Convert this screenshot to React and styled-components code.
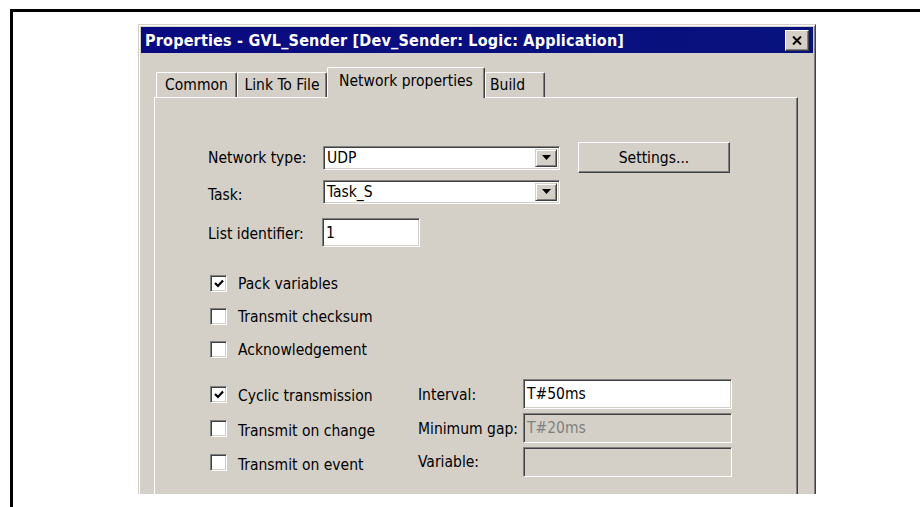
import styled, { createGlobalStyle } from "styled-components";

const GlobalStyle = createGlobalStyle`
  html, body {
    margin: 0;
    background: #fff;
  }
  body {
    font-family: "DejaVu Sans Condensed", "DejaVu Sans", sans-serif;
    font-size: 15.5px;
    color: #000;
  }
`;

const Page = styled.div`
  width: 920px;
  height: 507px;
  overflow: hidden;
  padding: 9px 0 0 10px;
  box-sizing: border-box;
  background: #fff;
`;

const Frame = styled.div`
  height: 100%;
  box-sizing: border-box;
  border-left: 3px solid #000;
  border-top: 3px solid #000;
  padding: 12px 0 0 125px;
`;

const Clip = styled.div`
  width: 678px;
  height: 470px;
  overflow: hidden;
`;

const Dialog = styled.div`
  width: 678px;
  height: 520px;
  box-sizing: border-box;
  background: #d4d0c8;
  border: 1px solid;
  border-color: #d4d0c8 #404040 #404040 #d4d0c8;
  box-shadow: inset 1px 1px #fff, inset -1px -1px #808080;
  padding: 2px;
`;

const TitleBar = styled.div`
  height: 26px;
  display: flex;
  align-items: center;
  justify-content: space-between;
  padding: 0 4px;
  background: linear-gradient(to right, #0a0a80, #08127e);
`;

const Title = styled.span`
  color: #fff;
  font-weight: bold;
  font-size: 16px;
  letter-spacing: 0.2px;
  white-space: nowrap;
`;

const CloseButton = styled.div`
  width: 24px;
  height: 21px;
  box-sizing: border-box;
  display: flex;
  align-items: center;
  justify-content: center;
  background: #d4d0c8;
  border: 1px solid;
  border-color: #fff #404040 #404040 #fff;
  box-shadow: inset -1px -1px #808080;
`;

const Body = styled.div`
  padding: 14px 15px 0 13px;
`;

const TabStrip = styled.div`
  height: 30px;
  display: flex;
  align-items: flex-end;
  padding-left: 2px;
  position: relative;
  z-index: 1;
`;

const Tab = styled.div`
  width: ${(p) => p.$w}px;
  height: ${(p) => (p.$active ? 31 : 25)}px;
  margin-bottom: ${(p) => (p.$active ? -1 : 0)}px;
  box-sizing: border-box;
  display: flex;
  align-items: ${(p) => (p.$active ? "flex-start" : "center")};
  justify-content: ${(p) => (p.$left ? "flex-start" : "center")};
  padding: ${(p) => (p.$active ? "4px 0 0" : p.$left ? "0 0 0 4px" : "0")};
  background: #d4d0c8;
  border-top: 1px solid #fff;
  border-left: 1px solid #fff;
  border-right: 1px solid #404040;
  border-radius: 2px 2px 0 0;
  box-shadow: inset -1px 0 #808080;
  white-space: nowrap;
`;

const Panel = styled.div`
  height: 420px;
  box-sizing: border-box;
  border: 1px solid;
  border-color: #fff #404040 #404040 #fff;
  box-shadow: inset -1px -1px #808080;
  padding: 44px 0 0 53px;
`;

const Row = styled.div`
  display: flex;
  align-items: center;
  height: ${(p) => p.$h}px;
  margin-top: ${(p) => p.$mt || 0}px;
  padding-left: ${(p) => p.$pl || 0}px;
`;

const Label = styled.span`
  width: ${(p) => p.$w}px;
  flex: none;
  white-space: nowrap;
  position: relative;
  top: ${(p) => p.$dy || 0}px;
`;

const Sunken = styled.div`
  width: ${(p) => p.$w}px;
  height: ${(p) => p.$h}px;
  flex: none;
  box-sizing: border-box;
  display: flex;
  align-items: center;
  border: 1px solid;
  border-color: #808080 #fff #fff #808080;
  box-shadow: inset 1px 1px #404040, inset -1px -1px #d4d0c8;
  background: ${(p) => (p.$disabled ? "#d4d0c8" : "#fff")};
  color: ${(p) => (p.$disabled ? "#808080" : "#000")};
  padding: 2px 2px 2px 3px;
`;

const Value = styled.span`
  flex: 1;
  white-space: nowrap;
`;

const DropButton = styled.div`
  width: 22px;
  height: 100%;
  box-sizing: border-box;
  display: flex;
  align-items: center;
  justify-content: center;
  background: #d4d0c8;
  border: 1px solid;
  border-color: #d4d0c8 #404040 #404040 #d4d0c8;
  box-shadow: inset 1px 1px #fff, inset -1px -1px #808080;
`;

const Button = styled.div`
  width: 152px;
  height: 31px;
  margin-left: 18px;
  flex: none;
  box-sizing: border-box;
  display: flex;
  align-items: center;
  justify-content: center;
  background: #d4d0c8;
  border: 1px solid;
  border-color: #fff #404040 #404040 #fff;
  box-shadow: inset -1px -1px #808080;
`;

const CheckItem = styled.div`
  width: ${(p) => p.$w || 300}px;
  flex: none;
  display: flex;
  align-items: center;
  gap: 11px;
  white-space: nowrap;
`;

const CheckText = styled.span`
  position: relative;
  top: ${(p) => p.$dy || 0}px;
`;

const Box = styled.div`
  width: 17px;
  height: 17px;
  box-sizing: border-box;
  display: flex;
  align-items: center;
  justify-content: center;
  border: 1px solid;
  border-color: #808080 #fff #fff #808080;
  box-shadow: inset 1px 1px #404040, inset -1px -1px #d4d0c8;
  background: #fff;
`;

const Arrow = () => (
  <svg width="9" height="5" viewBox="0 0 9 5">
    <path d="M0 0h9L4.5 5z" fill="#000" />
  </svg>
);

const Combo = ({ w, h, value }) => (
  <Sunken $w={w} $h={h} style={{ paddingRight: 2 }}>
    <Value>{value}</Value>
    <DropButton>
      <Arrow />
    </DropButton>
  </Sunken>
);

const Check = ({ checked, label, w, dy }) => (
  <CheckItem $w={w}>
    <Box>
      {checked && (
        <svg width="10" height="9" viewBox="0 0 10 9">
          <path d="M1 4l3 3L9 1.5" stroke="#000" strokeWidth="2.2" fill="none" />
        </svg>
      )}
    </Box>
    <CheckText $dy={dy}>{label}</CheckText>
  </CheckItem>
);

export default function App() {
  return (
    <>
      <GlobalStyle />
      <Page>
        <Frame>
          <Clip>
            <Dialog>
              <TitleBar>
                <Title>Properties - GVL_Sender [Dev_Sender: Logic: Application]</Title>
                <CloseButton>
                  <svg width="10" height="9" viewBox="0 0 10 9">
                    <path d="M1 0.5l8 8M9 0.5l-8 8" stroke="#000" strokeWidth="2" />
                  </svg>
                </CloseButton>
              </TitleBar>
              <Body>
                <TabStrip>
                  <Tab $w={81}>Common</Tab>
                  <Tab $w={90}>Link To File</Tab>
                  <Tab $w={158} $active>Network properties</Tab>
                  <Tab $w={60} $left>Build</Tab>
                </TabStrip>
                <Panel>
                  <Row $h={31}>
                    <Label $w={115}>Network type:</Label>
                    <Combo w={237} h={24} value="UDP" />
                    <Button>Settings...</Button>
                  </Row>
                  <Row $h={23} $mt={7}>
                    <Label $w={115} $dy={3}>Task:</Label>
                    <Combo w={237} h={24} value="Task_S" />
                  </Row>
                  <Row $h={29} $mt={15}>
                    <Label $w={114} $dy={1}>List identifier:</Label>
                    <Sunken $w={98} $h={29}>1</Sunken>
                  </Row>

                  <Row $h={33} $mt={20} $pl={2}>
                    <Check checked label="Pack variables" />
                  </Row>
                  <Row $h={33} $pl={2}>
                    <Check label="Transmit checksum" />
                  </Row>
                  <Row $h={33} $pl={2}>
                    <Check label="Acknowledgement" />
                  </Row>

                  <Row $h={34} $mt={11} $pl={2}>
                    <Check w={208} dy={2} checked label="Cyclic transmission" />
                    <Label $w={105} $dy={1}>Interval:</Label>
                    <Sunken $w={209} $h={30}>T#50ms</Sunken>
                  </Row>
                  <Row $h={34} $pl={2}>
                    <Check w={208} dy={3} label="Transmit on change" />
                    <Label $w={105} $dy={1}>Minimum gap:</Label>
                    <Sunken $w={209} $h={30} $disabled>T#20ms</Sunken>
                  </Row>
                  <Row $h={34} $pl={2}>
                    <Check w={208} dy={3} label="Transmit on event" />
                    <Label $w={105}>Variable:</Label>
                    <Sunken $w={209} $h={30} $disabled />
                  </Row>
                </Panel>
              </Body>
            </Dialog>
          </Clip>
        </Frame>
      </Page>
    </>
  );
}
